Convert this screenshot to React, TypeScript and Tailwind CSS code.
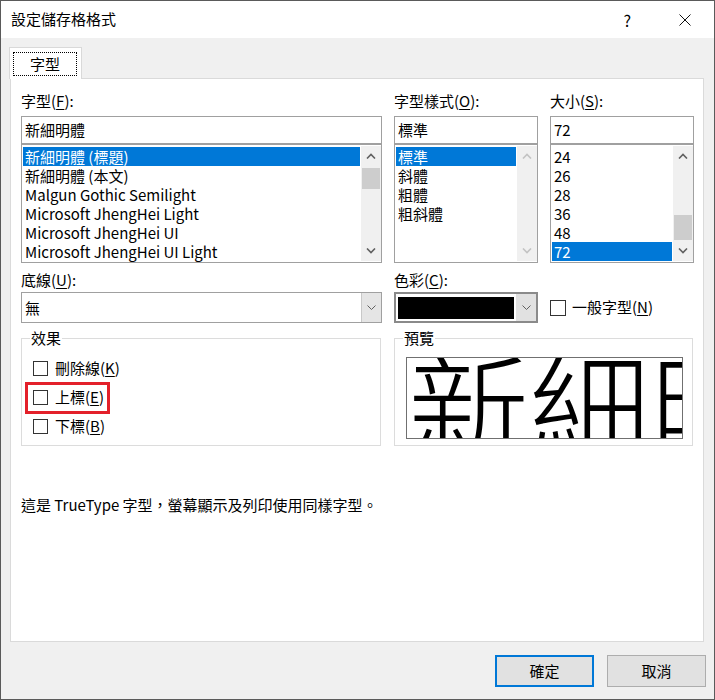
import React from 'react';

const UI_FONT = { fontFamily: '"Noto Sans CJK TC", "Noto Sans", sans-serif' };

function Chevron({ up = false, disabled = false }: { up?: boolean; disabled?: boolean }) {
  return (
    <svg width="10" height="6" viewBox="0 0 10 6" className="block">
      <path
        d={up ? 'M1 5.5 L5 1.5 L9 5.5' : 'M1 0.5 L5 4.5 L9 0.5'}
        fill="none"
        stroke={disabled ? '#c3c3c3' : '#606060'}
        strokeWidth="1.6"
      />
    </svg>
  );
}

function DropChevron() {
  return (
    <svg width="9" height="5" viewBox="0 0 9 5" className="block">
      <path d="M0.5 0.5 L4.5 4.5 L8.5 0.5" fill="none" stroke="#606060" strokeWidth="1" />
    </svg>
  );
}

function Scrollbar({ thumbTop, thumbH, disabled = false }: { thumbTop?: number; thumbH?: number; disabled?: boolean }) {
  return (
    <div className="w-[20px] my-[1px] mr-[0px] bg-[#f0f0f0] flex flex-col">
      <div className="h-[20px] flex items-center justify-center">
        <Chevron up disabled={disabled} />
      </div>
      <div className="flex-1 flex flex-col">
        {thumbH ? <div className="bg-[#cdcdcd] mx-[1px]" style={{ marginTop: thumbTop, height: thumbH }} /> : null}
      </div>
      <div className="h-[20px] flex items-center justify-center">
        <Chevron disabled={disabled} />
      </div>
    </div>
  );
}

function ListBox({
  items,
  selected,
  width,
  thumbTop,
  thumbH,
  disabled,
}: {
  items: string[];
  selected: number;
  width: string;
  thumbTop?: number;
  thumbH?: number;
  disabled?: boolean;
}) {
  return (
    <div className={`${width} h-[119px] border border-[#a0a0a0] bg-white flex`}>
      <div className="flex-1 pt-[2px] pl-[1px] pr-[1px] overflow-hidden">
        {items.map((it, i) => (
          <div
            key={it}
            className={`h-[19px] leading-[19px] px-[2px] whitespace-nowrap ${
              i === selected ? 'bg-[#0078d7] text-white' : 'text-black'
            }`}
          >
            {it}
          </div>
        ))}
      </div>
      <Scrollbar thumbTop={thumbTop} thumbH={thumbH} disabled={disabled} />
    </div>
  );
}

function TextBox({ value, width }: { value: string; width: string }) {
  return (
    <div className={`${width} h-[28px] border border-[#a0a0a0] bg-white pl-[3px] leading-[26px]`}>{value}</div>
  );
}

function Label({ text, k }: { text: string; k: string }) {
  return (
    <div className="h-[20px] leading-[20px] whitespace-nowrap">
      {text}(<u className="underline-offset-2">{k}</u>):
    </div>
  );
}

function Check({ text, k }: { text: string; k: string }) {
  return (
    <div className="flex items-center h-[29px]">
      <div className="w-[15px] h-[15px] border border-[#333333] bg-white" />
      <span className="ml-[7px] whitespace-nowrap">
        {text}(<u className="underline-offset-2">{k}</u>)
      </span>
    </div>
  );
}

export default function App() {
  return (
    <div
      className="w-[715px] h-[700px] bg-[#f0f0f0] border border-[#5a5a5a] flex flex-col text-[15px] text-black overflow-hidden"
      style={UI_FONT}
    >
      {/* title bar */}
      <div className="h-[37px] bg-white flex items-center pl-[10px] pr-[23px] shrink-0">
        <span className="tracking-[0px]">設定儲存格格式</span>
        <span className="ml-auto mr-[48px] text-[16px]">?</span>
        <svg width="12" height="12" viewBox="0 0 12 12">
          <path d="M0.5 0.5 L11.5 11.5 M11.5 0.5 L0.5 11.5" stroke="#111" strokeWidth="1" />
        </svg>
      </div>

      {/* tabs */}
      <div className="pt-[9px] pl-[8px] shrink-0">
        <div className="relative z-10 -mb-px w-[73px] h-[32px] border border-b-0 border-[#d9d9d9] bg-white flex items-start pt-[4px] pl-[3px]">
          <div className="w-[64px] h-[24px] border border-dotted border-black flex items-center justify-center">
            字型
          </div>
        </div>
      </div>

      {/* panel */}
      <div className="ml-[9px] w-[694px] h-[564px] border border-[#dadada] bg-white pl-[10px] pt-[12px] shrink-0">
        {/* row 1 */}
        <div className="flex gap-[12px]">
          <div className="w-[361px]">
            <Label text="字型" k="F" />
            <div className="mt-[5px]" />
            <TextBox value="新細明體" width="w-[361px]" />
            <ListBox
              width="w-[361px]"
              items={[
                '新細明體 (標題)',
                '新細明體 (本文)',
                'Malgun Gothic Semilight',
                'Microsoft JhengHei Light',
                'Microsoft JhengHei UI',
                'Microsoft JhengHei UI Light',
              ]}
              selected={0}
              thumbTop={2}
              thumbH={21}
            />
          </div>
          <div className="w-[144px]">
            <Label text="字型樣式" k="O" />
            <div className="mt-[5px]" />
            <TextBox value="標準" width="w-[144px]" />
            <ListBox width="w-[144px]" items={['標準', '斜體', '粗體', '粗斜體']} selected={0} disabled />
          </div>
          <div className="w-[144px]">
            <Label text="大小" k="S" />
            <div className="mt-[5px]" />
            <TextBox value="72" width="w-[144px]" />
            <ListBox
              width="w-[144px]"
              items={['24', '26', '28', '36', '48', '72']}
              selected={5}
              thumbTop={49}
              thumbH={25}
            />
          </div>
        </div>

        {/* row 2 */}
        <div className="flex gap-[12px] mt-[7px]">
          <div className="w-[361px]">
            <Label text="底線" k="U" />
            <div className="mt-[2px] h-[31px] border border-[#a0a0a0] bg-white flex">
              <div className="flex-1 pl-[3px] leading-[29px]">無</div>
              <div className="w-[20px] bg-[#e5e5e5] border-l border-[#c8c8c8] flex items-center justify-center">
                <DropChevron />
              </div>
            </div>
          </div>
          <div className="w-[144px]">
            <Label text="色彩" k="C" />
            <div className="mt-[2px] h-[31px] border-2 border-[#8a8a8a] bg-white flex">
              <div className="flex-1 pl-[2px] pt-[3px] pb-[2px] pr-[2px]">
                <div className="h-full bg-black" />
              </div>
              <div className="w-[20px] bg-[#e1e1e1] flex items-center justify-center">
                <DropChevron />
              </div>
            </div>
          </div>
          <div className="w-[144px] pt-[22px]">
            <div className="h-[31px] flex items-center">
              <div className="w-[16px] h-[16px] border border-[#333333] bg-white" />
              <span className="ml-[6px] whitespace-nowrap">
                一般字型(<u className="underline-offset-2">N</u>)
              </span>
            </div>
          </div>
        </div>

        {/* row 3 */}
        <div className="flex mt-[15px]">
          <div className="relative w-[360px] h-[108px] border border-[#dcdcdc] pl-[11px] pt-[15px]">
            <span className="absolute -top-[10px] left-[8px] bg-white px-[1px] leading-[18px]">效果</span>
            <Check text="刪除線" k="K" />
            <Check text="上標" k="E" />
            <Check text="下標" k="B" />
            <div className="absolute left-[3px] top-[43px] w-[85px] h-[32px] border-[3px] border-[#e3202a]" />
          </div>
          <div className="relative ml-[13px] w-[299px] h-[108px] border border-[#dcdcdc] pl-[11px] pt-[18px]">
            <span className="absolute -top-[10px] left-[8px] bg-white px-[1px] leading-[18px]">預覽</span>
            <div className="w-[277px] h-[82px] border border-[#707070] overflow-hidden">
              <div className="text-[121px] leading-[121px] -mt-[16px] ml-[1px] whitespace-nowrap font-light">
                新細明體
              </div>
            </div>
          </div>
        </div>

        <div className="mt-[49px] leading-[20px]">這是 TrueType 字型，螢幕顯示及列印使用同樣字型。</div>
      </div>

      {/* buttons */}
      <div className="flex justify-end gap-[13px] pr-[8px] mt-[13px]">
        <button className="w-[99px] h-[32px] border-2 border-[#0078d7] bg-[#e1e1e1]">確定</button>
        <button className="w-[99px] h-[32px] border border-[#adadad] bg-[#e1e1e1]">取消</button>
      </div>
    </div>
  );
}
